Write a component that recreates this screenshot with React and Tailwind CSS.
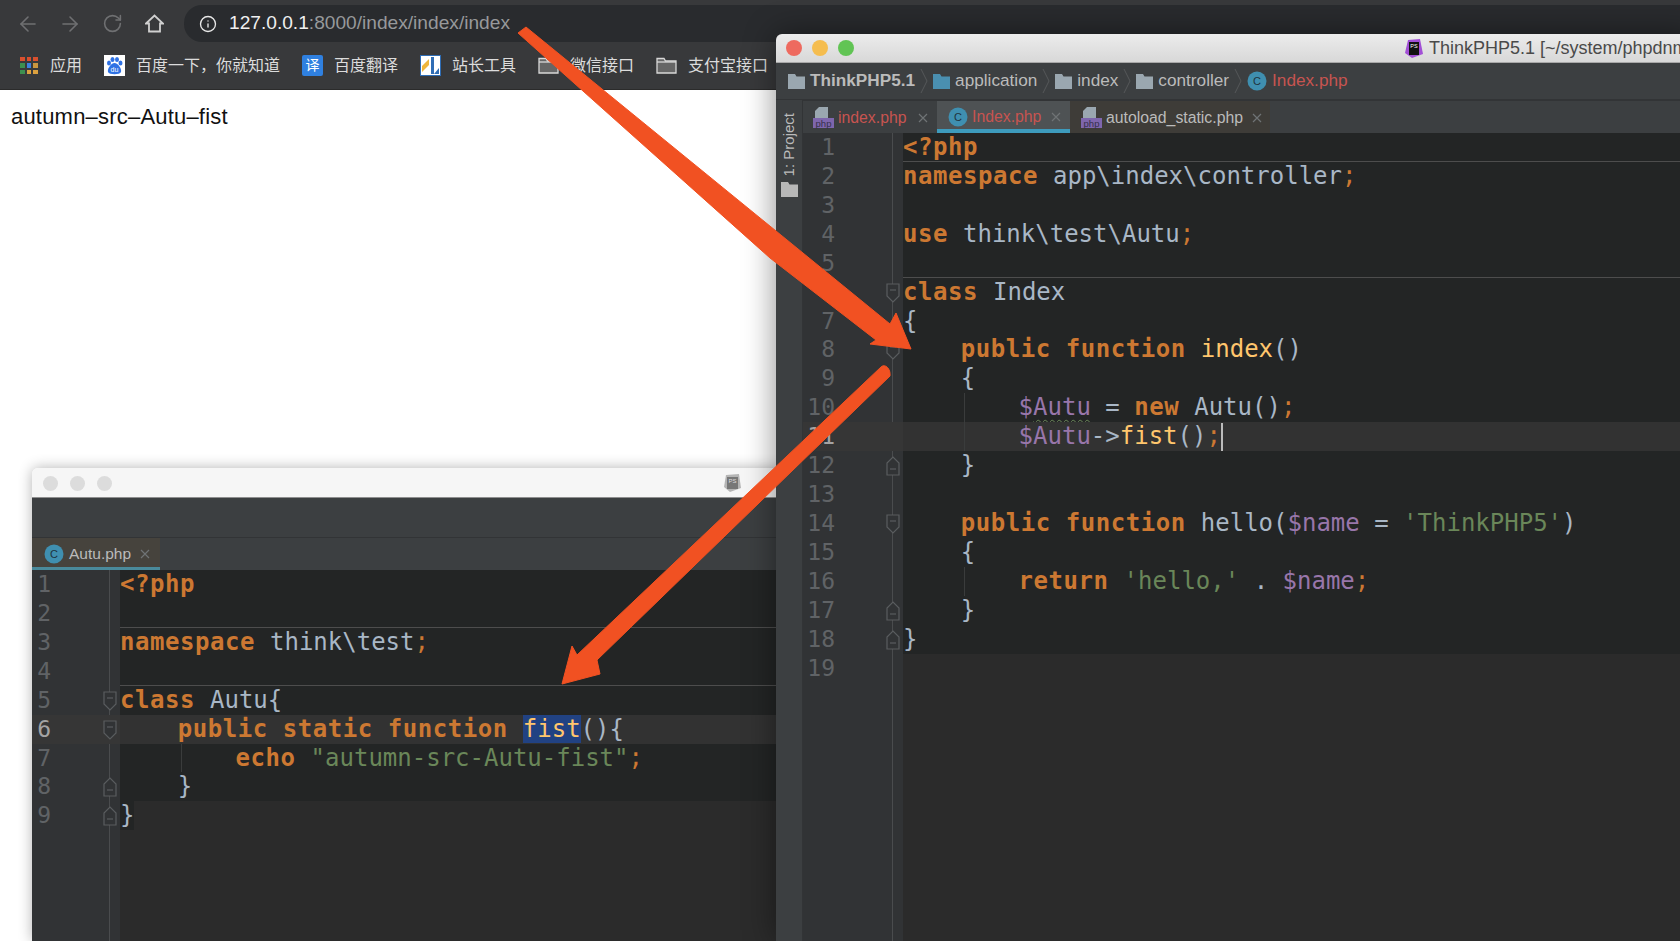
import { ArrowLeft, ArrowRight, RotateCw, Info } from "lucide-react";

const tokenClass = {
  k: "font-bold text-[#cc7832] tracking-[0.55px]",
  p: "text-[#a9b7c6]",
  s: "text-[#6a8759]",
  v: "text-[#9876aa]",
  f: "text-[#ffc66d]",
  o: "text-[#cc7832]",
  w: "text-[#9876aa] underline decoration-wavy decoration-[#6a8759] decoration-1 underline-offset-4",
  h: "text-[#ffc66d] bg-[#214283]",
};

const rightLines = [
  { t: [["k", "<?php"]], sep: true },
  { t: [["k", "namespace "], ["p", "app\\index\\controller"], ["o", ";"]] },
  { t: [] },
  { t: [["k", "use "], ["p", "think\\test\\Autu"], ["o", ";"]] },
  { t: [], sep: true },
  { t: [["k", "class "], ["p", "Index"]], fold: "down" },
  { t: [["p", "{"]] },
  { t: [["p", "    "], ["k", "public function "], ["f", "index"], ["p", "()"]], fold: "down" },
  { t: [["p", "    {"]] },
  { t: [["p", "        "], ["v", "$"], ["w", "Autu"], ["p", " = "], ["k", "new "], ["p", "Autu()"], ["o", ";"]], guide: true },
  { t: [["p", "        "], ["v", "$Autu"], ["p", "->"], ["f", "fist"], ["p", "()"], ["o", ";"]], guide: true, current: true, caret: true },
  { t: [["p", "    }"]], fold: "up" },
  { t: [] },
  { t: [["p", "    "], ["k", "public function "], ["p", "hello("], ["v", "$name"], ["p", " = "], ["s", "'ThinkPHP5'"], ["p", ")"]], fold: "down" },
  { t: [["p", "    {"]] },
  { t: [["p", "        "], ["k", "return "], ["s", "'hello,'"], ["p", " . "], ["v", "$name"], ["o", ";"]], guide: true },
  { t: [["p", "    }"]], fold: "up" },
  { t: [["p", "}"]], fold: "up" },
  { t: [], light: true },
];

const leftLines = [
  { t: [["k", "<?php"]] },
  { t: [], sep: true },
  { t: [["k", "namespace "], ["p", "think\\test"], ["o", ";"]] },
  { t: [], sep: true },
  { t: [["k", "class "], ["p", "Autu{"]], fold: "down" },
  { t: [["p", "    "], ["k", "public static function "], ["h", "fist"], ["p", "(){"]], fold: "down", current: true },
  { t: [["p", "        "], ["k", "echo "], ["s", "\"autumn-src-Autu-fist\""], ["o", ";"]], guide: true },
  { t: [["p", "    }"]], fold: "up" },
  { t: [["p", "}"]], fold: "up", light: true, brace: true },
];

function FoldMark({ dir, markClass }) {
  const d = dir === "down" ? "M1 1H13V13L7 19L1 13Z" : "M1 19H13V7L7 1L1 7Z";
  const y = dir === "down" ? 7 : 13;
  return (
    <svg className={`absolute top-[5px] ${markClass}`} width="14" height="20" viewBox="0 0 14 20" fill="#313335" stroke="#5a5d5f" strokeWidth="1.2">
      <path d={d} />
      <path d={`M4 ${y}H10`} />
    </svg>
  );
}

function CodeArea({ lines, gutterClass, foldClass, markClass, numClass }) {
  return (
    <div className="flex-1 flex min-h-0 font-['DejaVu_Sans_Mono',monospace] bg-[#2b2b2b]">
      <div className={`relative shrink-0 bg-[#313335] h-full ${gutterClass}`}>
        <div className={`absolute top-0 bottom-0 w-px bg-[#4a4c4e] ${foldClass}`}></div>
        {lines.map((line, i) => (
          <div key={i} className={`relative h-[28.93px] ${line.current ? "bg-[#363636]" : ""}`}>
            <div className={`text-right text-[23px] leading-[29px] ${numClass} ${line.current ? "text-[#a4a3a3]" : "text-[#606366]"}`}>
              {i + 1}
            </div>
            {line.fold && <FoldMark dir={line.fold} markClass={markClass} />}
          </div>
        ))}
      </div>
      <div className="flex-1 min-w-0 overflow-hidden">
        {lines.map((line, i) => (
          <div
            key={i}
            className={`relative h-[28.93px] whitespace-pre text-[24px] leading-[29px] ${line.brace ? "bg-[#232525] w-[14px]" : line.current ? "bg-[#323232]" : line.light ? "" : "bg-[#232525]"} ${line.sep ? "border-b border-[#4d4d4d]" : ""}`}
          >
            {line.guide && <div className="absolute left-[61px] top-0 bottom-0 w-px bg-[#3a3c3c]"></div>}
            {line.t.map((tok, j) => (
              <span key={j} className={tokenClass[tok[0]]}>{tok[1]}</span>
            ))}
            {line.caret && <span className="inline-block w-[2px] h-[29px] -mb-[8px] bg-[#bbbbbb]"></span>}
          </div>
        ))}
      </div>
    </div>
  );
}

function FolderIcon({ color = "#9aa7b0" }) {
  return (
    <svg width="17" height="15" viewBox="0 0 17 15" fill={color}>
      <path d="M0 0H7L8.500 2.500H17V15H0Z" />
    </svg>
  );
}

function ClassIcon() {
  return (
    <svg width="20" height="20" viewBox="0 0 20 20">
      <circle cx="10" cy="10" r="9.500" fill="#3f8fb0" />
      <text x="10" y="14" textAnchor="middle" fontSize="11" fontFamily="Liberation Sans" fill="#20343e">C</text>
    </svg>
  );
}

function PhpIcon() {
  return (
    <svg width="21" height="22" viewBox="0 0 21 22">
      <path d="M6 0H15V12H2V4Z" fill="#9aa7b0" />
      <rect x="0" y="11" width="21" height="10" fill="#7e66ad" />
      <text x="10.500" y="19.500" textAnchor="middle" fontSize="9.500" fontFamily="Liberation Sans" fill="#35304a">php</text>
    </svg>
  );
}

function Close() {
  return (
    <svg width="10" height="10" viewBox="0 0 10 10" stroke="#6f7375" strokeWidth="1.2">
      <path d="M1 1L9 9M9 1L1 9" />
    </svg>
  );
}

function Crumb({ children }) {
  return (
    <>
      <span>{children}</span>
      <svg className="mx-[5px]" width="8" height="26" viewBox="0 0 8 26" fill="none" stroke="#55585a">
        <path d="M1 1L7 13L1 25" />
      </svg>
    </>
  );
}

function BookmarkFolder() {
  return (
    <svg width="21" height="17" viewBox="0 0 21 17" fill="#666" stroke="#d8d8d8" strokeWidth="1.300">
      <path d="M1 4V1.500H8L9.500 4H20V16H1Z" />
      <path d="M1 5H20" />
    </svg>
  );
}

function AppsIcon() {
  const colors = ["#d9502e", "#d9502e", "#d9502e", "#3d8f4f", "#3b82e0", "#c9963f", "#3d8f4f", "#dba03f", "#dba03f"];
  return (
    <div className="grid grid-cols-3 gap-[2px] w-[18px] mr-[12px]">
      {colors.map((c, i) => (
        <div key={i} style={{ background: c }} className="h-[4.500px]"></div>
      ))}
    </div>
  );
}

export default function App() {
  return (
    <div className="relative w-[1680px] h-[941px] overflow-hidden bg-white font-['Liberation_Sans','Noto_Sans_CJK_SC',sans-serif]">
      {/* browser */}
      <div className="flex h-[45px] bg-[#38393b] pl-[7px] pt-[5px]">
        <div className="w-[42px] h-[37px] flex items-center justify-center text-[#6f7072]"><ArrowLeft size={24} strokeWidth={1.6} /></div>
        <div className="w-[42px] h-[37px] flex items-center justify-center text-[#6f7072]"><ArrowRight size={24} strokeWidth={1.6} /></div>
        <div className="w-[42px] h-[37px] flex items-center justify-center text-[#6f7072]"><RotateCw size={21} strokeWidth={1.8} /></div>
        <div className="w-[42px] h-[37px] flex items-center justify-center">
          <svg width="19" height="19" viewBox="0 0 19 19" fill="none" stroke="#d0d0d0" strokeWidth="1.800"><path d="M1 9.500L9.500 1.500L18 9.500H15V17.500H4V9.500Z" /></svg>
        </div>
        <div className="flex-1 ml-[9px] h-[37px] flex items-center bg-[#292b2e] rounded-l-[18px] pl-[15px] text-[19.150px]">
          <Info size={18} strokeWidth={1.8} className="text-[#e8e8e8] mr-[12px]" />
          <span className="text-[#f0f0f0]">127.0.0.1</span>
          <span className="text-[#97999b]">:8000/index/index/index</span>
        </div>
      </div>
      <div className="flex items-center h-[45px] bg-[#38393b] border-b border-[#2b2b2b] pl-[20px] pb-[3px] text-[16px] text-[#dcdcdc]">
        <AppsIcon />
        <span>应用</span>
        <svg className="ml-[22px] mr-[11px]" width="21" height="21" viewBox="0 0 21 21">
          <rect width="21" height="21" fill="#fff" />
          <g fill="#2f72e4">
            <ellipse cx="5" cy="8" rx="2" ry="2.500" />
            <ellipse cx="8.500" cy="4.500" rx="2" ry="2.500" />
            <ellipse cx="13" cy="4.500" rx="2" ry="2.500" />
            <ellipse cx="16.500" cy="8" rx="2" ry="2.500" />
            <path d="M10.500 8C14 8 18 14 17 17C16 20 5 20 4 17C3 14 7 8 10.500 8Z" />
          </g>
          <text x="10.500" y="17" textAnchor="middle" fontSize="7" fontFamily="Liberation Sans" fill="#fff">du</text>
        </svg>
        <span>百度一下，你就知道</span>
        <div className="ml-[22px] mr-[11px] w-[21px] h-[21px] rounded-[2px] bg-[#2f80e0] flex items-center justify-center text-[14px] text-white">译</div>
        <span>百度翻译</span>
        <svg className="ml-[22px] mr-[11px]" width="21" height="21" viewBox="0 0 21 21">
          <rect x="0.500" y="0.500" width="20" height="20" fill="#fff" stroke="#2f6db5" />
          <path d="M2 11L9 4V10L2 17Z" fill="#f0b63c" />
          <path d="M11 2H14V19H11Z" fill="#2f6db5" />
          <path d="M14 19L19 13V19Z" fill="#2f6db5" />
        </svg>
        <span>站长工具</span>
        <div className="ml-[22px] mr-[11px] flex"><BookmarkFolder /></div>
        <span>微信接口</span>
        <div className="ml-[22px] mr-[11px] flex"><BookmarkFolder /></div>
        <span>支付宝接口</span>
      </div>
      <div className="pl-[11px] pt-[13px] text-[22px] tracking-[0.2px] leading-[28px] text-[#111]">autumn–src–Autu–fist</div>

      {/* left PhpStorm window */}
      <div className="absolute left-[32px] top-[468px] w-[760px] h-[473px] flex flex-col rounded-t-[6px] overflow-hidden shadow-[0_0_14px_rgba(0,0,0,0.3)]">
        <div className="flex items-center h-[30px] bg-[#f6f6f6] border-b border-[#8f8f8f] pl-[11px] pt-[1px] gap-[12px] relative">
          <div className="w-[15px] h-[15px] rounded-full bg-[#dcdcdc]"></div>
          <div className="w-[15px] h-[15px] rounded-full bg-[#dcdcdc]"></div>
          <div className="w-[15px] h-[15px] rounded-full bg-[#dcdcdc]"></div>
          <svg className="absolute left-[692px] top-[6px]" width="17" height="18" viewBox="0 0 17 18">
            <path d="M2 1L15 0L17 14L6 18L0 13Z" fill="#b5b5b5" />
            <rect x="3" y="3" width="11" height="12" fill="#777" />
            <text x="8.500" y="9" textAnchor="middle" fontSize="6" fontFamily="Liberation Sans" fill="#ddd">PS</text>
          </svg>
        </div>
        <div className="h-[40px] bg-[#3c3f41] border-b border-[#323436]"></div>
        <div className="flex h-[32px] bg-[#3c3f41]">
          <div className="flex items-center w-[128px] pl-[12px] pt-[3px] bg-[#46433d] border-b-[3px] border-[#4a8a9b] text-[15.500px] text-[#bbbbbb]">
            <ClassIcon />
            <span className="ml-[5px] mr-[9px]">Autu.php</span>
            <Close />
          </div>
        </div>
        <CodeArea lines={leftLines} gutterClass="w-[88px]" foldClass="left-[77px]" markClass="left-[71px]" numClass="w-[19px]" />
      </div>

      {/* right PhpStorm window */}
      <div className="absolute left-[776px] top-[34px] w-[920px] h-[907px] flex flex-col rounded-t-[6px] overflow-hidden shadow-[0_0_32px_rgba(0,0,0,0.45)]">
        <div className="relative flex items-center h-[29px] bg-linear-to-b from-[#ececec] to-[#d8d8d8] border-b border-[#a8a8a8] pl-[10px] gap-[10px]">
          <div className="w-[16px] h-[16px] rounded-full bg-[#ee6a5f]"></div>
          <div className="w-[16px] h-[16px] rounded-full bg-[#f5bd4f]"></div>
          <div className="w-[16px] h-[16px] rounded-full bg-[#61c454]"></div>
          <div className="absolute left-[629px] top-0 bottom-0 flex items-center gap-[6px] text-[18px] text-[#4a4a4a] whitespace-nowrap">
            <svg width="18" height="19" viewBox="0 0 18 19">
              <path d="M3 1L15 0L18 15L7 19L0 14Z" fill="#a24fd6" />
              <rect x="4" y="3" width="10" height="13" fill="#111" />
              <text x="9" y="9" textAnchor="middle" fontSize="5.500" fontFamily="Liberation Sans" fill="#fff">PS</text>
            </svg>
            <span>ThinkPHP5.1 [~/system/phpdnmp/www/ThinkPHP5.1]</span>
          </div>
        </div>
        <div className="flex items-center h-[37px] bg-[#3c3f41] border-b border-[#323436] pl-[12px] text-[17.200px] text-[#bbbbbb]">
          <FolderIcon />
          <span className="w-[5px]"></span>
          <Crumb><b>ThinkPHP5.1</b></Crumb>
          <FolderIcon color="#4a8fb0" />
          <span className="w-[5px]"></span>
          <Crumb>application</Crumb>
          <FolderIcon />
          <span className="w-[5px]"></span>
          <Crumb>index</Crumb>
          <FolderIcon />
          <span className="w-[5px]"></span>
          <Crumb>controller</Crumb>
          <ClassIcon />
          <span className="ml-[5px] text-[#c75450]">Index.php</span>
        </div>
        <div className="flex-1 flex min-h-0">
          <div className="w-[27px] shrink-0 bg-[#3c3f41] border-r border-[#323436] flex flex-col items-center pt-[13px]">
            <span className="[writing-mode:vertical-rl] rotate-180 text-[15px] text-[#bbbbbb]">1: Project</span>
            <div className="mt-[6px]"><FolderIcon color="#b8b8b8" /></div>
          </div>
          <div className="flex-1 min-w-0 flex flex-col">
            <div className="flex h-[33px] bg-[#3c3f41] border-t border-[#323436] text-[15.800px]">
              <div className="flex items-center w-[134px] pl-[10px] pt-[1px] text-[#c75450]">
                <PhpIcon />
                <span className="ml-[4px] mr-[11px]">index.php</span>
                <Close />
              </div>
              <div className="flex items-center w-[133px] pl-[11px] pt-[4px] bg-[#4e5254] border-b-[4px] border-[#3d9bbd] text-[#c75450]">
                <ClassIcon />
                <span className="ml-[4px] mr-[10px]">Index.php</span>
                <Close />
              </div>
              <div className="flex items-center w-[200px] pl-[11px] pt-[1px] bg-[#3e3c38] text-[#bbbbbb]">
                <PhpIcon />
                <span className="ml-[4px] mr-[9px]">autoload_static.php</span>
                <Close />
              </div>
            </div>
            <CodeArea lines={rightLines} gutterClass="w-[100px]" foldClass="left-[89px]" markClass="left-[83px]" numClass="w-[32px]" />
          </div>
        </div>
      </div>

      {/* red arrows drawn over the screenshot */}
      <svg className="absolute inset-0 pointer-events-none" width="1680" height="941" fill="#f15122" stroke="#f15122" strokeWidth="1" strokeLinejoin="round">
        <path d="M526 27L890 324L896 313L911 349L870 344L876 340L770 258L518 33Z" />
        <path d="M881 367C885 363 891 369 890 376L597 660L600 674L562 684L572 646L577 655Z" />
      </svg>
    </div>
  );
}
